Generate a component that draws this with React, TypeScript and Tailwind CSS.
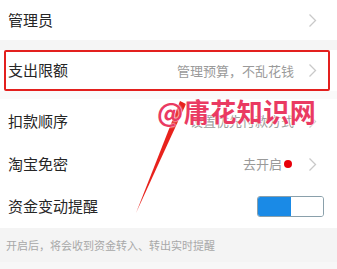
import React from "react";

const Chevron = () => (
  <svg width="9" height="15" viewBox="0 0 9 15" className="shrink-0">
    <polyline points="1.5,1.5 7.5,7.5 1.5,13.5" fill="none" stroke="#c9c9c9" strokeWidth="1.3" />
  </svg>
);

export default function App() {
  return (
    <div
      className="relative w-[337px] h-[269px] overflow-hidden bg-white"
      style={{ fontFamily: '"Noto Sans CJK SC", "Noto Sans", sans-serif' }}
    >
      {/* row 1 */}
      <div className="h-[40px] flex items-center pl-[8px] pr-[20px] bg-white">
        <span className="text-[15px] text-[#262626] flex-1">管理员</span>
        <Chevron />
      </div>
      <div className="h-[10px] bg-[#f5f5f5]" />
      {/* row 2 */}
      <div className="h-[41px] flex items-center pl-[8px] pr-[20px] bg-white">
        <span className="text-[15px] text-[#262626] flex-1">支出限额</span>
        <span className="text-[13px] text-[#9a9a9a] mr-[14px]">管理预算，不乱花钱</span>
        <Chevron />
      </div>
      <div className="h-[8px] bg-[#fafafa]" />
      {/* row 3 */}
      <div className="h-[44px] flex items-center pl-[8px] pr-[20px] bg-white">
        <span className="text-[15px] text-[#262626] flex-1">扣款顺序</span>
        <span className="text-[13px] text-[#9a9a9a] mr-[14px]">设置优先付款方式</span>
        <Chevron />
      </div>
      {/* row 4 */}
      <div className="h-[42px] flex items-center pl-[8px] pr-[20px] bg-white">
        <span className="text-[15px] text-[#262626] flex-1">淘宝免密</span>
        <span className="text-[13px] text-[#9a9a9a]">去开启</span>
        <span className="w-[8px] h-[8px] rounded-full bg-[#e8000b] ml-[2px] mr-[16px]" />
        <Chevron />
      </div>
      {/* row 5 */}
      <div className="h-[43px] flex items-center pl-[8px] pr-[13px] bg-white">
        <span className="text-[15px] text-[#262626] flex-1">资金变动提醒</span>
        <div className="w-[67px] h-[21px] rounded-[3px] flex overflow-hidden border border-[#8aa0ab]">
          <div className="w-[33px] h-full bg-[#1a8ae6]" />
          <div className="flex-1 h-full bg-white" />
        </div>
      </div>
      {/* footer */}
      <div className="h-[34px] bg-[#f4f4f4] flex items-center pl-[6px]">
        <span className="text-[11px] text-[#a8a8a8]">开启后，将会收到资金转入、转出实时提醒</span>
      </div>
      <div className="h-[7px] bg-[#f7f7f7]" />

      {/* red annotation box */}
      <div className="absolute left-[4px] top-[50px] w-[326px] h-[41px] border-2 border-[#e3201e] rounded-[2px]" />

      {/* arrow */}
      <svg className="absolute left-0 top-0" width="337" height="269">
        <polygon points="136,213 180,101 186,104" fill="#e8221c" />
      </svg>

      {/* watermark */}
      <div
        className="absolute left-[157px] top-[96px] text-[26px] font-bold leading-[30px] text-[#ea3a62] tracking-[0.5px]"
        style={{ textShadow: "0 0 2px #fff, 0 0 2px #fff" }}
      >
        @庸花知识网
      </div>
    </div>
  );
}
